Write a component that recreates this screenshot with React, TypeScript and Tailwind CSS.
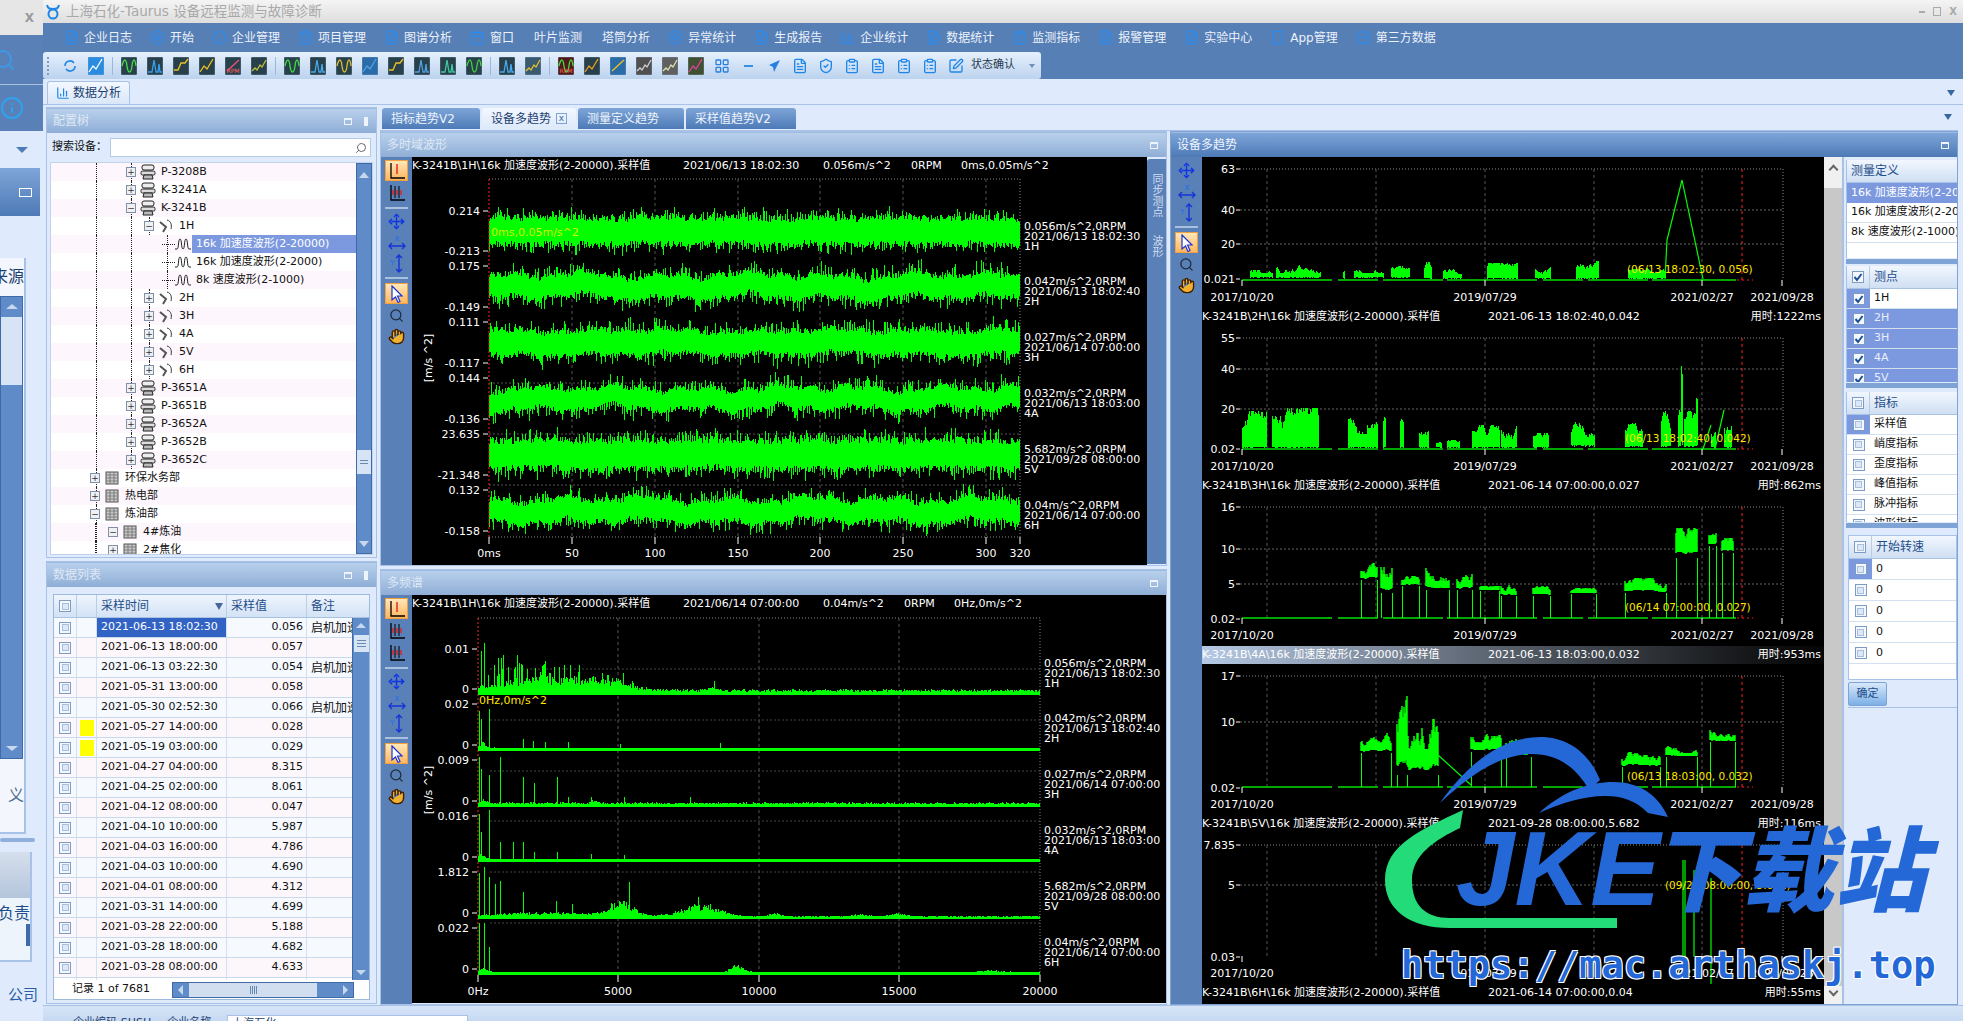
import {
  BarChart3,
  Calendar,
  CheckSquare,
  ClipboardList,
  FileText,
  Hand,
  Info,
  LayoutGrid,
  Move,
  PlayCircle,
  Search,
  ShieldCheck,
  Smartphone,
  SquarePen,
} from 'lucide-react';
import type { ReactNode } from 'react';

const rng = (seed: number) => {
  let s = seed;
  return () => {
    s = (s * 16807) % 2147483647;
    return s / 2147483647;
  };
};

// ---- chart paths ----
const wavePath = (cy: number, amp: number, spike: number, drift: number, seed: number) => {
  const r = rng(seed);
  let d = '';
  for (let x = 489; x < 1020; x += 1) {
    const base =
      (drift * (Math.sin(x / 13 + seed) + 0.7 * Math.sin(x / 5.3 + seed * 2) + 0.5 * Math.sin(x / 31 + seed * 3))) / 1.6;
    let up = amp * (0.75 + r() * 0.55);
    let down = amp * (0.75 + r() * 0.55);
    if (r() < 0.3) up += spike * r();
    if (r() < 0.3) down += spike * r();
    d += `M${x} ${Math.round(cy + base - up)}V${Math.round(cy + base + down)}`;
  }
  return d;
};

type Spec = { base: number; noise: number; spikes: number[][]; humps: number[][]; seed: number; decay?: number };

const specPath = ({ base, noise, spikes, humps, seed, decay = 0 }: Spec) => {
  const r = rng(seed);
  let d = '';
  for (let x = 478; x < 1040; x += 1) {
    let h = noise * (0.5 + r());
    humps.forEach(([c, w, a]) => {
      const t = (x - c) / w;
      h += a * Math.exp(-t * t) * (0.45 + r() * 0.7);
    });
    if (decay && x < 640 && r() < 0.35) h += decay * r() * (1 - (x - 478) / 190);
    d += `M${x} ${base + 2}V${Math.round(base - h)}`;
  }
  spikes.forEach(([x, h]) => {
    d += `M${x} ${base}V${base - h}`;
  });
  return d;
};

const blockPath = (base: number, blocks: number[][], seed: number) => {
  const r = rng(seed);
  let d = '';
  blocks.forEach(([x0, x1, lo, hi]) => {
    let walk = 0.7;
    for (let x = x0; x <= x1; x += 1) {
      walk = Math.min(1, Math.max(0.35, walk + (r() - 0.5) * 0.35));
      const top = lo + (hi - lo) * walk;
      const bottom = lo < 10 ? lo * (0.5 + r() * 0.6) : lo + (hi - lo) * 0.2 * walk;
      d += `M${x} ${Math.round(base - bottom)}V${Math.round(base - top)}`;
    }
  });
  return d;
};

const edgePath = (base: number, blocks: number[][]) =>
  blocks.map(([x0, x1, lo]) => `M${x0} ${base}V${base - lo}M${x1} ${base}V${base - lo}`).join('');

// ---- small glyphs ----
const GLYPHS = [
  'M1 9C3 1 5 1 6 9S10 17 11 9 14 1 15 9',
  'M1 15H5L7 3 9 15H11L12 7 13 15H15',
  'M1 13H5L8 6H12L15 2',
  'M1 15L5 9 8 12 14 2',
  'M2 14L14 3',
  'M1 14L4 11 6 13 9 8 11 10 15 3',
];

const ToolGlyph = ({ v, color, bg = '#27404a', label }: { v: number; color: string; bg?: string; label?: string }) => (
  <svg width="16" height="18" viewBox="0 0 16 18" className="shrink-0">
    <rect x="0" y="0" width="16" height="18" rx="1" fill={bg} stroke="#8ea7c4" strokeWidth="0.5" />
    <path d={GLYPHS[v]} fill="none" stroke={color} strokeWidth="1.3" />
    {label && (
      <text x="8" y="16" fontSize="6" textAnchor="middle" fill="#ff6060">
        {label}
      </text>
    )}
  </svg>
);

const AxisIcon = ({ bars = 1 }: { bars?: number }) => (
  <svg width="20" height="20" viewBox="0 0 20 20">
    <path d="M4 2V17H18" fill="none" stroke="#000" strokeWidth="1.3" />
    {bars > 1 && <path d="M8 3V15M12 3V15" stroke="#000" strokeWidth="1" />}
    <path d={bars > 1 ? 'M6 7V12M10 7V12M14 7V12' : 'M10 3V13'} stroke="#e02020" strokeWidth="1.4" />
  </svg>
);

const CursorIcon = () => (
  <svg width="16" height="18" viewBox="0 0 16 18">
    <path d="M3 1L13 11H8.5L11 16.5 9 17.5 6.5 12 3 15Z" fill="#fff" stroke="#1434d8" strokeWidth="1.2" />
  </svg>
);

const XArrows = () => (
  <svg width="20" height="17" viewBox="0 0 20 17">
    <text x="10" y="6" fontSize="7" textAnchor="middle" fill="#1a6cf0">X</text>
    <path d="M2 11H18M5 8L2 11 5 14M15 8L18 11 15 14" fill="none" stroke="#1434d8" strokeWidth="1.4" />
  </svg>
);

const YArrows = () => (
  <svg width="20" height="19" viewBox="0 0 20 19">
    <text x="3" y="11" fontSize="7" fill="#1a6cf0">Y</text>
    <path d="M12 1V18M9 4L12 1 15 4M9 15L12 18 15 15" fill="none" stroke="#1434d8" strokeWidth="1.4" />
  </svg>
);

const ActiveTool = ({ children }: { children: ReactNode }) => (
  <div className="w-[23px] h-[21px] flex items-center justify-center bg-gradient-to-b from-[#ffe7b8] to-[#ffb65c] border border-[#f0a040]">
    {children}
  </div>
);

const ChartTools = ({ kind }: { kind: 'wave' | 'spectrum' | 'trend' }) => (
  <div className="w-[31px] shrink-0 bg-[#5a80b8] flex flex-col items-center pt-[3px] gap-[2px]">
    {kind !== 'trend' && (
      <>
        <ActiveTool>
          <AxisIcon />
        </ActiveTool>
        {kind === 'spectrum' ? (
          <>
            <AxisIcon bars={3} />
            <AxisIcon bars={3} />
          </>
        ) : (
          <AxisIcon bars={2} />
        )}
        <div className="w-[23px] h-[2px] bg-[#a9c0de] my-[2px]" />
      </>
    )}
    <Move size={17} className={`text-[#1234e0] fill-[#3a7fe8] ${kind === 'trend' ? 'mt-[2px]' : ''}`} />
    <div className="mt-[3px]">
      <XArrows />
    </div>
    <YArrows />
    <div className="w-[23px] h-[2px] bg-[#a9c0de] my-[2px]" />
    <ActiveTool>
      <CursorIcon />
    </ActiveTool>
    <Search size={15} className="text-[#1d2b3a] mt-[2px]" />
    <Hand size={17} className="text-[#402000] fill-[#f0b030] mt-[3px]" />
  </div>
);

const PanelHeader = ({ title, active, pin }: { title: string; active?: boolean; pin?: boolean }) => (
  <div
    className={`h-[25px] shrink-0 flex items-center px-[6px] border-t border-[#9fbbe0] ${
      active
        ? 'bg-gradient-to-b from-[#7ea5d8] to-[#4d7ab6] text-[#f0f5fd]'
        : 'bg-gradient-to-b from-[#b9d0ec] to-[#8faed6] text-[#dfe8f5]'
    }`}
  >
    <span className="text-[12px]">{title}</span>
    <div className="ml-auto flex items-center gap-[12px] pr-[2px]">
      <div className="w-[8px] h-[7px] border border-[#eef4fc] border-t-2" />
      {pin && <div className="w-[4px] h-[9px] bg-[#eef4fc]" />}
    </div>
  </div>
);

// ---- top menu ----
const MENU: [string, number][] = [
  ['企业日志', 0], ['开始', 1], ['企业管理', 2], ['项目管理', 3], ['图谱分析', 4], ['窗口', 5],
  ['叶片监测', -1], ['塔筒分析', -1], ['异常统计', 7], ['生成报告', 4], ['企业统计', 8], ['数据统计', 4],
  ['监测指标', 3], ['报警管理', 4], ['实验中心', 4], ['App管理', 9], ['第三方数据', 10],
];

const MenuIcon = ({ k }: { k: number }) => {
  const c = 'text-[#2a8cf0] shrink-0';
  if (k === -1) return null;
  if (k === 1 || k === 7) return <PlayCircle size={15} className={c} />;
  if (k === 2) return <Info size={15} className={c} />;
  if (k === 3) return <ClipboardList size={15} className={c} />;
  if (k === 5) return <Calendar size={15} className={c} />;
  if (k === 8) return <BarChart3 size={15} className={c} />;
  if (k === 9) return <Smartphone size={15} className={c} />;
  if (k === 10) return <CheckSquare size={15} className={c} />;
  return <FileText size={15} className={c} />;
};

const MenuBar = () => (
  <div className="h-[29px] flex items-center pl-[21px] gap-[18px] text-[12px] text-[#edf2fa]">
    {MENU.map(([label, k], i) => (
      <div key={label} className={`flex items-center gap-[5px] ${i === 6 || i === 7 ? 'ml-[2px]' : ''}`}>
        <MenuIcon k={k} />
        <span>{label}</span>
      </div>
    ))}
  </div>
);

const ToolSep = () => <div className="w-px h-[18px] bg-[#9db7d8] -mx-[2px] shrink-0" />;

const Grip = () => (
  <div className="shrink-0 flex flex-col gap-[2px]">
    <div className="w-[2px] h-[2px] bg-[#7f9cc4]" />
    <div className="w-[2px] h-[2px] bg-[#7f9cc4]" />
    <div className="w-[2px] h-[2px] bg-[#7f9cc4]" />
    <div className="w-[2px] h-[2px] bg-[#7f9cc4]" />
    <div className="w-[2px] h-[2px] bg-[#7f9cc4]" />
  </div>
);

const Toolbar = () => (
  <div className="h-[27px] w-[998px] flex items-center pl-[4px] gap-[10px] rounded-[3px] bg-gradient-to-b from-[#e6f0fd] to-[#bcd3ee]">
    <Grip />
    <svg width="16" height="16" viewBox="0 0 16 16" className="shrink-0 ml-[3px]">
      <path d="M3 8a5 5 0 0 1 9-3M13 8a5 5 0 0 1-9 3" fill="none" stroke="#1f86e8" strokeWidth="1.6" />
    </svg>
    <ToolGlyph v={3} color="#fff" bg="#2a8ce0" />
    <ToolSep />
    <ToolGlyph v={0} color="#48e048" />
    <ToolGlyph v={1} color="#3aa0f0" />
    <ToolGlyph v={2} color="#f0c020" />
    <ToolGlyph v={3} color="#f0c020" />
    <ToolGlyph v={4} color="#f05080" label="RPM" />
    <ToolGlyph v={5} color="#c0c040" />
    <ToolSep />
    <ToolGlyph v={0} color="#40e040" />
    <ToolGlyph v={1} color="#48a8f0" />
    <ToolGlyph v={0} color="#e0c030" />
    <ToolGlyph v={3} color="#50a0e8" bg="#2b6ca8" />
    <ToolGlyph v={2} color="#f0c020" />
    <ToolGlyph v={1} color="#50a0e0" />
    <ToolGlyph v={1} color="#40c8a0" />
    <ToolGlyph v={0} color="#40d040" />
    <ToolSep />
    <ToolGlyph v={1} color="#48a8f0" />
    <ToolGlyph v={5} color="#e0c030" bg="#3a5a70" />
    <ToolSep />
    <ToolGlyph v={0} color="#40e040" bg="#501818" label="RPM" />
    <ToolGlyph v={3} color="#f0a020" />
    <ToolGlyph v={4} color="#f0c020" bg="#2a6ca8" />
    <ToolGlyph v={5} color="#d0d0d0" bg="#505050" />
    <ToolGlyph v={5} color="#e0e0b0" bg="#606060" />
    <ToolGlyph v={3} color="#e040a0" bg="#405030" />
    <LayoutGrid size={16} className="text-[#2a80e0] shrink-0" />
    <div className="w-[16px] flex justify-center shrink-0">
      <div className="w-[9px] h-[2px] bg-[#3a90e0]" />
    </div>
    <svg width="16" height="16" viewBox="0 0 16 16" className="shrink-0">
      <path d="M14 2L3 7 7 9 8 14Z" fill="#2a80e0" />
    </svg>
    <FileText size={16} className="text-[#1f86e8] shrink-0" />
    <ShieldCheck size={16} className="text-[#1f86e8] shrink-0" />
    <ClipboardList size={16} className="text-[#1f86e8] shrink-0" />
    <FileText size={16} className="text-[#1f86e8] shrink-0" />
    <ClipboardList size={16} className="text-[#1f86e8] shrink-0" />
    <ClipboardList size={16} className="text-[#1f86e8] shrink-0" />
    <SquarePen size={16} className="text-[#1f86e8] shrink-0" />
    <span className="text-[11px] text-[#2a3a50] whitespace-nowrap -ml-[3px]">状态确认</span>
    <div className="ml-[4px] w-0 h-0 border-x-[3px] border-x-transparent border-t-[4px] border-t-[#6f8fb8]" />
  </div>
);

// ---- tree ----
type TreeRow = { label: string; level: number; open?: boolean; kind: 'machine' | 'sensor' | 'wave' | 'folder'; selected?: boolean };

const TREE: TreeRow[] = [
  { label: 'P-3208B', level: 2, kind: 'machine' },
  { label: 'K-3241A', level: 2, kind: 'machine' },
  { label: 'K-3241B', level: 2, kind: 'machine', open: true },
  { label: '1H', level: 3, kind: 'sensor', open: true },
  { label: '16k 加速度波形(2-20000)', level: 4, kind: 'wave', selected: true },
  { label: '16k 加速度波形(2-2000)', level: 4, kind: 'wave' },
  { label: '8k 速度波形(2-1000)', level: 4, kind: 'wave' },
  { label: '2H', level: 3, kind: 'sensor' },
  { label: '3H', level: 3, kind: 'sensor' },
  { label: '4A', level: 3, kind: 'sensor' },
  { label: '5V', level: 3, kind: 'sensor' },
  { label: '6H', level: 3, kind: 'sensor' },
  { label: 'P-3651A', level: 2, kind: 'machine' },
  { label: 'P-3651B', level: 2, kind: 'machine' },
  { label: 'P-3652A', level: 2, kind: 'machine' },
  { label: 'P-3652B', level: 2, kind: 'machine' },
  { label: 'P-3652C', level: 2, kind: 'machine' },
  { label: '环保水务部', level: 0, kind: 'folder' },
  { label: '热电部', level: 0, kind: 'folder' },
  { label: '炼油部', level: 0, kind: 'folder', open: true },
  { label: '4#炼油', level: 1, kind: 'folder', open: true },
  { label: '2#焦化', level: 1, kind: 'folder' },
];

const GUIDES: Record<number, number[]> = { 0: [], 1: [44], 2: [45, 80], 3: [45, 80, 98], 4: [45, 80, 116] };

const TreeIcon = ({ kind }: { kind: TreeRow['kind'] }) => {
  if (kind === 'machine')
    return (
      <svg width="16" height="16" viewBox="0 0 16 16" className="shrink-0">
        <rect x="2" y="1" width="12" height="5" rx="2" fill="#eee" stroke="#222" />
        <rect x="1" y="7" width="14" height="4" rx="1.5" fill="#ddd" stroke="#222" />
        <path d="M3 15H13L12 11H4Z" fill="#bbb" stroke="#222" />
      </svg>
    );
  if (kind === 'sensor')
    return (
      <svg width="16" height="16" viewBox="0 0 16 16" className="shrink-0">
        <path d="M2 4L8 9 5 14" fill="none" stroke="#555" strokeWidth="2" />
        <path d="M9 2C13 3 14 7 13 11" fill="none" stroke="#333" />
      </svg>
    );
  if (kind === 'wave')
    return (
      <svg width="16" height="14" viewBox="0 0 16 14" className="shrink-0">
        <path d="M0 12H2C4 12 3 2 5 2S6 12 8 12 9 2 11 2 12 12 14 12H16" fill="none" stroke="#222" />
      </svg>
    );
  return (
    <svg width="16" height="14" viewBox="0 0 16 14" className="shrink-0">
      <rect x="2" y="1" width="12" height="12" fill="#c8c8c8" stroke="#555" />
      <path d="M2 4H14M2 7H14M2 10H14M6 1V13M10 1V13" stroke="#666" strokeWidth="0.7" />
    </svg>
  );
};

const ConfigTree = () => (
  <div className="relative flex-1 min-h-0 flex bg-white overflow-hidden">
    <div className="flex-1 min-w-0 overflow-hidden text-[11px] text-[#111]">
      {TREE.map((row, i) => (
        <div
          key={row.label + i}
          className={`relative h-[18px] flex items-center ${i % 2 ? 'bg-white' : 'bg-[#fdf6fc]'}`}
          style={{ paddingLeft: 39 + row.level * 18 }}
        >
          <div className="absolute left-0 top-0 h-full w-full pointer-events-none">
            {[45, ...GUIDES[row.level].filter((g) => g !== 45)].map((g) => (
              <div key={g} className="absolute top-0 h-full border-l border-dotted border-[#222]" style={{ left: g }} />
            ))}
          </div>
          {row.level === 4 ? (
            <div className="relative w-[13px] shrink-0 border-b border-dotted border-[#222]" />
          ) : (
            <div className="relative z-10 w-[10px] h-[10px] shrink-0 bg-[#f0f0f0] border border-[#8090a8] flex items-center justify-center text-[9px] leading-none text-[#334]">
              {row.open ? '−' : '+'}
            </div>
          )}
          <div className={`${row.level === 4 ? 'w-0' : 'w-[4px]'} shrink-0`} />
          <TreeIcon kind={row.kind} />
          <span
            className={`ml-[1px] flex-1 h-full flex items-center pl-[4px] whitespace-nowrap ${
              row.selected ? 'bg-[#7c99df] text-white' : ''
            }`}
          >
            {row.label}
          </span>
        </div>
      ))}
    </div>
    <div className="w-[16px] shrink-0 flex flex-col items-center bg-[#5f8cc8] border border-[#3f6aa8]">
      <div className="w-0 h-0 mt-[8px] border-x-[5px] border-x-transparent border-b-[6px] border-b-[#c6d7ee]" />
      <div className="w-full h-[24px] mt-[272px] bg-[#d7e4f5] flex flex-col gap-[2px] items-center justify-center">
        <div className="w-[8px] h-px bg-[#6a8ab0]" />
        <div className="w-[8px] h-px bg-[#6a8ab0]" />
      </div>
      <div className="w-0 h-0 mt-auto mb-[6px] border-x-[5px] border-x-transparent border-t-[6px] border-t-[#c6d7ee]" />
    </div>
  </div>
);

// ---- data list ----
const SAMPLES: [string, string, string?, boolean?][] = [
  ['2021-06-13 18:02:30', '0.056', '启机加速'],
  ['2021-06-13 18:00:00', '0.057'],
  ['2021-06-13 03:22:30', '0.054', '启机加速'],
  ['2021-05-31 13:00:00', '0.058'],
  ['2021-05-30 02:52:30', '0.066', '启机加速'],
  ['2021-05-27 14:00:00', '0.028', '', true],
  ['2021-05-19 03:00:00', '0.029', '', true],
  ['2021-04-27 04:00:00', '8.315'],
  ['2021-04-25 02:00:00', '8.061'],
  ['2021-04-12 08:00:00', '0.047'],
  ['2021-04-10 10:00:00', '5.987'],
  ['2021-04-03 16:00:00', '4.786'],
  ['2021-04-03 10:00:00', '4.690'],
  ['2021-04-01 08:00:00', '4.312'],
  ['2021-03-31 14:00:00', '4.699'],
  ['2021-03-28 22:00:00', '5.188'],
  ['2021-03-28 18:00:00', '4.682'],
  ['2021-03-28 08:00:00', '4.633'],
];

const Check = ({ checked }: { checked?: boolean }) => (
  <div className="w-[12px] h-[12px] border border-[#7d9cc4] bg-[#f4f8fe] flex items-center justify-center shrink-0">
    {checked ? (
      <svg width="10" height="10" viewBox="0 0 10 10">
        <path d="M1.5 5L4 8 8.5 2" fill="none" stroke="#1e4f96" strokeWidth="2" />
      </svg>
    ) : (
      <div className="w-[7px] h-[7px] bg-[#dce8f6] border border-[#a8c0de]" />
    )}
  </div>
);

const DataList = () => (
  <div className="flex-1 min-h-0 mx-[6px] mt-[7px] mb-[3px] border border-[#9db9dc] bg-white flex flex-col text-[11px] overflow-hidden">
    <div className="h-[23px] shrink-0 flex bg-gradient-to-b from-[#eff5fd] to-[#d3e2f5] text-[#1d4d8a] border-b border-[#a8c2e2]">
      <div className="w-[23px] flex items-center justify-center border-r border-[#b9cde6]">
        <Check />
      </div>
      <div className="w-[20px] border-r border-[#b9cde6]" />
      <div className="w-[130px] flex items-center pl-[4px] pr-[3px] border-r border-[#b9cde6] text-[12px]">
        采样时间
        <div className="ml-auto w-0 h-0 border-x-[4px] border-x-transparent border-t-[7px] border-t-[#44689c]" />
      </div>
      <div className="w-[80px] flex items-center pl-[4px] border-r border-[#b9cde6] text-[12px]">采样值</div>
      <div className="flex-1 flex items-center pl-[4px] text-[12px]">备注</div>
    </div>
    <div className="flex-1 min-h-0 flex">
      <div className="flex-1 min-w-0 flex flex-col overflow-hidden">
        {SAMPLES.map(([time, val, note, flag], i) => (
          <div
            key={time}
            className={`h-[20px] shrink-0 flex text-[#111] border-b border-[#c9d9ec] ${i % 2 ? 'bg-[#fdf7fb]' : 'bg-[#f6faff]'}`}
          >
            <div className="w-[23px] flex items-center justify-center border-r border-[#d3e0f0]">
              <Check />
            </div>
            <div className="w-[20px] flex items-center justify-center border-r border-[#d3e0f0]">
              {flag && <div className="w-[14px] h-[16px] bg-[#ffff00]" />}
            </div>
            <div
              className={`w-[130px] flex items-center pl-[4px] border-r border-[#d3e0f0] ${
                i === 0 ? 'bg-[#3162c4] text-white' : ''
              }`}
            >
              {time}
            </div>
            <div className="w-[80px] flex items-center justify-end pr-[3px] border-r border-[#d3e0f0]">{val}</div>
            <div className="flex-1 flex items-center pl-[4px] whitespace-nowrap overflow-hidden text-[12px]">{note}</div>
          </div>
        ))}
        <div className="flex-1 flex">
          <div className="w-[23px] border-r border-[#d3e0f0]" />
          <div className="w-[20px] border-r border-[#d3e0f0]" />
          <div className="w-[130px] border-r border-[#d3e0f0]" />
          <div className="w-[80px] border-r border-[#d3e0f0]" />
        </div>
      </div>
      <div className="w-[17px] shrink-0 bg-[#5f8cc8] border-l border-[#3f6aa8] flex flex-col items-center">
        <div className="w-0 h-0 mt-[5px] border-x-[5px] border-x-transparent border-b-[5px] border-b-[#c6d7ee]" />
        <div className="w-[15px] h-[17px] mt-[7px] bg-[#d7e4f5] flex flex-col gap-[2px] items-center justify-center">
          <div className="w-[9px] h-px bg-[#6a8ab0]" />
          <div className="w-[9px] h-px bg-[#6a8ab0]" />
          <div className="w-[9px] h-px bg-[#6a8ab0]" />
        </div>
        <div className="w-0 h-0 mt-auto mb-[5px] border-x-[5px] border-x-transparent border-t-[5px] border-t-[#c6d7ee]" />
      </div>
    </div>
    <div className="h-[19px] shrink-0 flex items-center">
      <span className="w-[118px] shrink-0 pl-[18px] text-[#111]">记录 1 of 7681</span>
      <div className="w-[182px] h-[16px] bg-[#5f8cc8] border border-[#3f6aa8] flex items-center px-[5px]">
        <div className="w-0 h-0 border-y-[5px] border-y-transparent border-r-[5px] border-r-[#c6d7ee]" />
        <div className="w-[128px] h-[14px] ml-[6px] bg-[#d0deef] flex items-center justify-center gap-[1px]">
          <div className="w-px h-[8px] bg-[#6a8ab0]" />
          <div className="w-px h-[8px] bg-[#6a8ab0]" />
          <div className="w-px h-[8px] bg-[#6a8ab0]" />
          <div className="w-px h-[8px] bg-[#6a8ab0]" />
        </div>
        <div className="ml-auto w-0 h-0 border-y-[5px] border-y-transparent border-l-[5px] border-l-[#c6d7ee]" />
      </div>
    </div>
  </div>
);

// ---- multi time domain ----
const WAVE_ROWS = [
  { top: 211, low: 251, hi: '0.214', lo: '-0.213', a: '0.056m/s^2,0RPM', b: '2021/06/13 18:02:30', c: '1H', amp: 13, spike: 9, drift: 1, seed: 11 },
  { top: 266, low: 307, hi: '0.175', lo: '-0.149', a: '0.042m/s^2,0RPM', b: '2021/06/13 18:02:40', c: '2H', amp: 11, spike: 10, drift: 4, seed: 29 },
  { top: 322, low: 363, hi: '0.111', lo: '-0.117', a: '0.027m/s^2,0RPM', b: '2021/06/14 07:00:00', c: '3H', amp: 12, spike: 10, drift: 2.5, seed: 47 },
  { top: 378, low: 419, hi: '0.144', lo: '-0.136', a: '0.032m/s^2,0RPM', b: '2021/06/13 18:03:00', c: '4A', amp: 10, spike: 11, drift: 4, seed: 83 },
  { top: 434, low: 475, hi: '23.635', lo: '-21.348', a: '5.682m/s^2,0RPM', b: '2021/09/28 08:00:00', c: '5V', amp: 14, spike: 10, drift: 1, seed: 101 },
  { top: 490, low: 531, hi: '0.132', lo: '-0.158', a: '0.04m/s^2,0RPM', b: '2021/06/14 07:00:00', c: '6H', amp: 11, spike: 9, drift: 4, seed: 131 },
];
const WAVE_X: [string, number][] = [['0ms', 489], ['50', 572], ['100', 655], ['150', 738], ['200', 820], ['250', 903], ['300', 986], ['320', 1020]];

const WaveChart = () => (
  <svg width="735" height="408" viewBox="412 157 735 408" className="block shrink-0" fontSize="11" fill="#fff">
    <rect x="412" y="157" width="735" height="408" fill="#000" />
    <text x="412" y="169">K-3241B\1H\16k 加速度波形(2-20000).采样值</text>
    <text x="683" y="169">2021/06/13 18:02:30</text>
    <text x="823" y="169">0.056m/s^2</text>
    <text x="911" y="169">0RPM</text>
    <text x="961" y="169">0ms,0.05m/s^2</text>
    <path d="M489 179H1020V537H489" fill="none" stroke="#888" strokeDasharray="1 2" />
    {WAVE_X.slice(1, -1).map(([, x]) => (
      <path key={x} d={`M${x} 179V537`} stroke="#555" strokeDasharray="3 3" />
    ))}
    <path d="M489 383H1020M489 434H1020M489 485H1020" stroke="#555" strokeDasharray="2 2" />
    {WAVE_ROWS.map((r) => (
      <g key={r.c}>
        <path d={wavePath((r.top + r.low) / 2, r.amp, r.spike, r.drift, r.seed)} stroke="#00ff00" strokeWidth="1" shapeRendering="crispEdges" />
        <text x="480" y={r.top + 4} textAnchor="end">{r.hi}</text>
        <text x="480" y={r.low + 4} textAnchor="end">{r.lo}</text>
        <path d={`M483 ${r.top}H488M483 ${r.low}H488`} stroke="#fff" />
        <text x="1024" y={r.top + 19}>{r.a}</text>
        <text x="1024" y={r.top + 29}>{r.b}</text>
        <text x="1024" y={r.top + 39}>{r.c}</text>
      </g>
    ))}
    <path d="M489 179V537" stroke="#ff2020" strokeDasharray="2 2" />
    <text x="491" y="236" fill="#d8ef00">0ms,0.05m/s^2</text>
    {WAVE_X.map(([label, x]) => (
      <g key={label}>
        <path d={`M${x} 537V544`} stroke="#fff" />
        <text x={x} y="557" textAnchor="middle">{label}</text>
      </g>
    ))}
    <text transform="translate(432 358) rotate(-90)" textAnchor="middle">[m/s ^2]</text>
  </svg>
);

// ---- multi spectrum ----
const SPEC_ROWS: (Spec & { hi: string; zero: number; top: number; a: string; b: string; c: string })[] = [
  {
    hi: '0.01', top: 649, zero: 689, base: 693, noise: 2.5, seed: 7, decay: 28, a: '0.056m/s^2,0RPM', b: '2021/06/13 18:02:30', c: '1H',
    spikes: [[481, 42], [484, 50], [494, 28], [498, 35], [503, 38], [517, 38], [522, 28], [543, 28], [570, 28], [608, 18], [623, 20], [714, 12]],
    humps: [[545, 60, 13], [610, 28, 7], [712, 6, 4]],
  },
  {
    hi: '0.02', top: 704, zero: 745, base: 749, noise: 1, seed: 19, a: '0.042m/s^2,0RPM', b: '2021/06/13 18:02:40', c: '2H',
    spikes: [[479, 38], [481, 30], [489, 40], [523, 10], [533, 8], [545, 7], [568, 7], [620, 5], [720, 6]],
    humps: [[482, 5, 6]],
  },
  {
    hi: '0.009', top: 760, zero: 801, base: 805, noise: 1.8, seed: 31, a: '0.027m/s^2,0RPM', b: '2021/06/14 07:00:00', c: '3H',
    spikes: [[479, 48], [481, 36], [489, 30], [500, 48], [523, 28], [534, 22], [557, 28], [568, 8], [591, 8], [624, 8], [690, 8]],
    humps: [[483, 5, 4], [593, 4, 3]],
  },
  {
    hi: '0.016', top: 816, zero: 857, base: 860, noise: 1, seed: 43, a: '0.032m/s^2,0RPM', b: '2021/06/13 18:03:00', c: '4A',
    spikes: [[479, 46], [481, 28], [489, 50], [500, 18], [513, 18], [523, 18], [534, 8], [557, 8], [591, 6], [624, 5]],
    humps: [[481, 4, 6]],
  },
  {
    hi: '1.812', top: 872, zero: 913, base: 917, noise: 0.6, seed: 59, a: '5.682m/s^2,0RPM', b: '2021/09/28 08:00:00', c: '5V',
    spikes: [[479, 44], [484, 50], [489, 40], [495, 33], [500, 36], [523, 25], [556, 16], [572, 13], [611, 14], [620, 15], [629, 35], [698, 20]],
    humps: [[550, 70, 4], [622, 16, 14], [700, 26, 12], [775, 8, 3], [860, 12, 2], [898, 12, 3]],
  },
  {
    hi: '0.022', top: 928, zero: 969, base: 973, noise: 1, seed: 71, a: '0.04m/s^2,0RPM', b: '2021/06/14 07:00:00', c: '6H',
    spikes: [[479, 50], [484, 50], [489, 26]],
    humps: [[482, 6, 4], [737, 8, 7], [990, 10, 2]],
  },
];
const SPEC_X: [string, number][] = [['0Hz', 478], ['5000', 618], ['10000', 759], ['15000', 899], ['20000', 1040]];

const SpecChart = () => (
  <svg width="755" height="408" viewBox="412 595 755 408" className="block shrink-0" fontSize="11" fill="#fff">
    <rect x="412" y="595" width="755" height="408" fill="#000" />
    <text x="412" y="607">K-3241B\1H\16k 加速度波形(2-20000).采样值</text>
    <text x="683" y="607">2021/06/14 07:00:00</text>
    <text x="823" y="607">0.04m/s^2</text>
    <text x="904" y="607">0RPM</text>
    <text x="954" y="607">0Hz,0m/s^2</text>
    <path d="M478 618H1040V975" fill="none" stroke="#888" strokeDasharray="1 2" />
    <path d="M478 618V975" stroke="#ff2020" strokeDasharray="2 2" />
    {SPEC_X.slice(1, -1).map(([, x]) => (
      <path key={x} d={`M${x} 618V975`} stroke="#555" strokeDasharray="3 3" />
    ))}
    <path d="M490 669H1040M490 720H1040M490 771H1040M490 821H1040M490 872H1040M490 923H1040" stroke="#444" strokeDasharray="2 2" />
    {SPEC_ROWS.map((r) => (
      <g key={r.c}>
        <path d={specPath(r)} stroke="#00ff00" strokeWidth="1" shapeRendering="crispEdges" />
        <text x="469" y={r.top + 4} textAnchor="end">{r.hi}</text>
        <text x="469" y={r.zero + 4} textAnchor="end">0</text>
        <path d={`M472 ${r.top}H477M472 ${r.zero}H477`} stroke="#fff" />
        <text x="1044" y={r.top + 18}>{r.a}</text>
        <text x="1044" y={r.top + 28}>{r.b}</text>
        <text x="1044" y={r.top + 38}>{r.c}</text>
      </g>
    ))}
    <text x="479" y="704" fill="#ffe600">0Hz,0m/s^2</text>
    {SPEC_X.map(([label, x]) => (
      <g key={label}>
        <path d={`M${x} 975V982`} stroke="#fff" />
        <text x={x} y="995" textAnchor="middle">{label}</text>
      </g>
    ))}
    <text transform="translate(432 790) rotate(-90)" textAnchor="middle">[m/s ^2]</text>
  </svg>
);

// ---- trends ----
type Trend = {
  title?: [string, string, string];
  highlight?: boolean;
  top: number;
  ticks: [string, number][];
  first: string;
  note: string;
  noteX: number;
  noteY?: number;
  filled?: number[][];
  floating?: number[][];
  extra?: string;
};

const TRENDS: Trend[] = [
  {
    top: 169,
    first: '2017/10/20',
    ticks: [['63', 169], ['40', 210], ['20', 244], ['0.021', 279]],
    note: '(06/13 18:02:30, 0.056)',
    noteX: 1626,
    filled: [[1249, 1271, 3, 14], [1275, 1319, 3, 15], [1342, 1343, 2, 10], [1353, 1382, 3, 14], [1390, 1408, 3, 14], [1423, 1430, 2, 18], [1442, 1460, 2, 13], [1486, 1516, 2, 17], [1534, 1549, 2, 13], [1575, 1597, 2, 19], [1627, 1664, 2, 12]],
    extra: 'M1664 279L1666 240 1681 180 1702 279',
  },
  {
    title: ['K-3241B\\2H\\16k 加速度波形(2-20000).采样值', '2021-06-13 18:02:40,0.042', '用时:1222ms'],
    top: 338,
    first: '2017/10/20',
    ticks: [['55', 338], ['40', 369], ['20', 409], ['0.02', 449]],
    note: '(06/13 18:02:40, 0.042)',
    noteX: 1624,
    filled: [[1241, 1265, 2, 38], [1271, 1317, 2, 41], [1347, 1366, 2, 38], [1366, 1376, 2, 30], [1382, 1384, 2, 36], [1399, 1402, 2, 33], [1418, 1427, 2, 18], [1435, 1440, 2, 7], [1446, 1458, 2, 9], [1471, 1498, 2, 24], [1500, 1515, 2, 26], [1532, 1547, 2, 16], [1570, 1593, 4, 28], [1624, 1641, 3, 26], [1660, 1669, 3, 38], [1677, 1679, 3, 60], [1680, 1681, 8, 99], [1683, 1694, 3, 38], [1695, 1696, 4, 80], [1710, 1714, 2, 22], [1723, 1730, 2, 36]],
    extra: 'M1702 449L1710 425M1714 449L1723 410',
  },
  {
    title: ['K-3241B\\3H\\16k 加速度波形(2-20000).采样值', '2021-06-14 07:00:00,0.027', '用时:862ms'],
    top: 507,
    first: '2017/10/20',
    ticks: [['16', 507], ['10', 549], ['5', 584], ['0.02', 619]],
    note: '(06/14 07:00:00, 0.027)',
    noteX: 1624,
    floating: [[1360, 1376, 38, 55], [1380, 1391, 25, 70], [1401, 1418, 32, 42], [1425, 1448, 28, 55], [1456, 1471, 28, 45], [1479, 1498, 27, 32], [1500, 1515, 22, 35], [1532, 1549, 22, 32], [1570, 1595, 24, 30], [1624, 1665, 25, 40], [1675, 1696, 60, 90], [1708, 1715, 72, 85], [1721, 1732, 65, 80]],
  },
  {
    title: ['K-3241B\\4A\\16k 加速度波形(2-20000).采样值', '2021-06-13 18:03:00,0.032', '用时:953ms'],
    highlight: true,
    top: 676,
    first: '2017/10/20',
    ticks: [['17', 676], ['10', 722], ['0.02', 788]],
    note: '(06/13 18:03:00, 0.032)',
    noteX: 1626,
    floating: [[1360, 1390, 34, 55], [1396, 1406, 12, 95], [1406, 1437, 12, 85], [1470, 1500, 35, 55], [1505, 1530, 30, 50], [1621, 1659, 20, 35], [1665, 1696, 30, 42], [1709, 1734, 45, 60]],
    extra: 'M1437 755L1470 785',
  },
  {
    title: ['K-3241B\\5V\\16k 加速度波形(2-20000).采样值', '2021-09-28 08:00:00,5.682', '用时:116ms'],
    top: 845,
    first: '2017/10/20',
    ticks: [['7.835', 845], ['5', 885], ['0.03', 957]],
    note: '(09/28 08:00:00, 5.682)',
    noteX: 1664,
    noteY: 889,
    extra: 'M1682 957V860M1684 957V860M1693 957V870M1710 957V878 1726 957 1766 906',
  },
];

const TrendChart = ({ t, i }: { t: Trend; i: number }) => {
  const base = t.top + 111;
  const y0 = t.top - 12;
  const lines = [1266, 1375, 1484, 1593, 1701];
  const labels: [string, number][] = [[t.first, 1241], ['2019/07/29', 1484], ['2021/02/27', 1701], ['2021/09/28', 1781]];
  return (
    <div className="shrink-0">
      {t.title && (
        <div
          className={`h-[18px] flex items-center text-[11px] whitespace-nowrap text-white ${
            t.highlight ? 'bg-gradient-to-r from-[#b6cae6] via-[#555d68] to-[#050505]' : ''
          }`}
        >
          <span className="w-[286px]">{t.title[0]}</span>
          <span>{t.title[1]}</span>
          <span className="ml-auto pr-[3px]">{t.title[2]}</span>
        </div>
      )}
      <svg width="622" height="151" viewBox={`1201 ${y0} 622 151`} className="block" fontSize="11" fill="#fff">
        <path d={`M1239 ${t.top}H1782V${base}`} fill="none" stroke="#888" strokeDasharray="1 2" />
        {lines.map((x) => (
          <path key={x} d={`M${x} ${t.top}V${base}`} stroke="#555" strokeDasharray="3 3" />
        ))}
        {t.ticks.slice(1, -1).map(([l, y]) => (
          <path key={l} d={`M1239 ${y}H1782`} stroke="#666" strokeDasharray="2 2" />
        ))}
        <path d={`M1741 ${t.top}V${base}`} stroke="#ff2020" strokeDasharray="3 3" />
        <path d={`M1241 ${base}H1735`} stroke="#00e000" strokeWidth={i === 4 ? 0 : 1.5} strokeDasharray="90 6 40 5 60 4" />
        {t.filled && <path d={blockPath(base, t.filled, 17 + i)} stroke="#00ff00" strokeWidth="1" shapeRendering="crispEdges" />}
        {t.floating && <path d={edgePath(base, t.floating)} stroke="#00ff00" strokeWidth="1" shapeRendering="crispEdges" />}
        {t.floating && <path d={blockPath(base, t.floating, 17 + i)} stroke="#00ff00" strokeWidth="1.5" />}
        {t.extra && <path d={t.extra} fill="none" stroke="#00ff00" strokeWidth="1.2" />}
        <path d={`M1736 ${base}H1752`} stroke="#ff2020" strokeDasharray="2 3" />
        {t.ticks.map(([l, y]) => (
          <g key={l}>
            <text x="1234" y={y + 4} textAnchor="end">{l}</text>
            <path d={`M1235 ${y}H1239`} stroke="#fff" />
          </g>
        ))}
        {labels.map(([l, x]) => (
          <g key={l}>
            <path d={`M${x} ${base}V${base + 6}`} stroke="#fff" />
            <text x={x} y={base + 21} textAnchor="middle">{l}</text>
          </g>
        ))}
        <text x={t.noteX} y={t.noteY ?? base - 7} fill="#ffe600" fontSize="10.5">{t.note}</text>
      </svg>
    </div>
  );
};

// ---- right filters ----
const ListHead = ({ label, check, checked }: { label: string; check?: boolean; checked?: boolean }) => (
  <div className="h-[23px] shrink-0 flex items-center bg-gradient-to-b from-[#f2f7fe] to-[#cfdff3] text-[#1d4d8a] text-[12px] border-b border-[#a8c2e2]">
    {check && (
      <div className="w-[23px] h-full shrink-0 flex items-center justify-center border-r border-[#b9cde6]">
        <Check checked={checked} />
      </div>
    )}
    <span className="pl-[4px] whitespace-nowrap">{label}</span>
  </div>
);

const CheckRow = ({ label, checked, selected, dim, tall }: { label: string; checked?: boolean; selected?: boolean; dim?: boolean; tall?: boolean }) => (
  <div className={`${tall ? 'h-[21px]' : 'h-[20px]'} shrink-0 flex items-center border-b border-[#d3e0f0] ${dim ? 'bg-[#7c99df] text-[#e8eefb]' : 'bg-white text-[#111]'}`}>
    <div className={`w-[23px] h-full shrink-0 flex items-center justify-center ${selected || dim ? 'bg-[#7c99df]' : ''}`}>
      <Check checked={checked} />
    </div>
    <span className="pl-[4px] whitespace-nowrap">{label}</span>
  </div>
);

const Splitter = () => <div className="h-[5px] shrink-0 mt-[1px] mb-[2px] bg-[#7fa3d4]" />;

const FilterColumn = () => (
  <div className="flex-1 min-w-0 flex flex-col bg-[#dfebfd] border-l-2 border-[#a7c2e6] text-[11px] pl-[2px] overflow-hidden">
    <div className="h-[98px] shrink-0 mt-[3px] border-l border-[#a7c2e6] bg-white overflow-hidden">
      <ListHead label="测量定义" />
      <div className="h-[20px] flex items-center pl-[4px] whitespace-nowrap bg-[#7c99df] text-white">16k 加速度波形(2-20000)</div>
      <div className="h-[20px] flex items-center pl-[4px] whitespace-nowrap text-[#111] border-b border-[#d3e0f0]">16k 加速度波形(2-2000)</div>
      <div className="h-[20px] flex items-center pl-[4px] whitespace-nowrap text-[#111] border-b border-[#d3e0f0]">8k 速度波形(2-1000)</div>
    </div>
    <Splitter />
    <div className="h-[116px] shrink-0 border-l border-[#a7c2e6] bg-white flex flex-col overflow-hidden">
      <ListHead label="测点" check checked />
      <CheckRow label="1H" checked selected />
      <CheckRow label="2H" checked dim />
      <CheckRow label="3H" checked dim />
      <CheckRow label="4A" checked dim />
      <CheckRow label="5V" checked dim />
    </div>
    <Splitter />
    <div className="h-[130px] shrink-0 mt-[2px] border-l border-[#a7c2e6] bg-white flex flex-col overflow-hidden">
      <ListHead label="指标" check />
      <CheckRow label="采样值" selected />
      <CheckRow label="峭度指标" />
      <CheckRow label="歪度指标" />
      <CheckRow label="峰值指标" />
      <CheckRow label="脉冲指标" />
      <CheckRow label="波形指标" />
    </div>
    <Splitter />
    <div className="h-[145px] shrink-0 ml-[2px] mt-[5px] border border-[#a7c2e6] bg-white flex flex-col overflow-hidden">
      <ListHead label="开始转速" check />
      <CheckRow label="0" selected tall />
      <CheckRow label="0" tall />
      <CheckRow label="0" tall />
      <CheckRow label="0" tall />
      <CheckRow label="0" tall />
    </div>
    <div className="ml-[2px] h-[28px] shrink-0 pt-[2px] border-b border-[#a7c2e6]">
      <button className="w-[39px] h-[24px] rounded-[2px] border border-[#7fa3d4] bg-gradient-to-b from-[#d9e8fa] to-[#7cb0e6] text-[#1d4d8a] text-[11px]">
        确定
      </button>
    </div>
  </div>
);

const LeftRail = () => (
  <div className="w-[43px] shrink-0 flex flex-col bg-[#dfebfd] text-[#2a5ea8] overflow-hidden">
    <div className="h-[35px] shrink-0 flex items-start justify-end pr-[9px] pt-[9px] bg-[#e6e6e6] text-[#999] text-[12px] font-bold">X</div>
    <div className="h-[50px] shrink-0 flex items-center pl-[2px] bg-[#5a80b8] border-b border-[#a9c0de]">
      <Search size={24} className="text-[#3d98e8] -ml-[10px]" />
    </div>
    <div className="h-[46px] shrink-0 flex items-center bg-[#5a80b8]">
      <Info size={24} className="text-[#2ea2ee]" />
    </div>
    <div className="h-[37px] shrink-0 flex items-center justify-center">
      <div className="w-0 h-0 border-x-[6px] border-x-transparent border-t-[6px] border-t-[#4f7cb9]" />
    </div>
    <div className="w-[40px] h-[48px] shrink-0 flex items-center justify-end pr-[8px] bg-gradient-to-b from-[#7fa5d8] to-[#4d7ab6]">
      <div className="w-[13px] h-[9px] border border-white" />
    </div>
    <div className="w-[40px] flex-1 flex flex-col">
      <div className="w-[26px] h-[576px] mt-[42px] shrink-0 bg-[#f3f7fd] border-r-2 border-b-2 border-[#a7c2e6] flex flex-col">
        <div className="h-[38px] shrink-0 flex items-center text-[16px] whitespace-nowrap justify-end overflow-hidden text-[#1d3f70]">来源</div>
        <div className="w-[23px] h-[463px] shrink-0 bg-[#5f8cc8] border border-[#3f6aa8] flex flex-col items-center">
          <div className="w-0 h-0 mt-[7px] border-x-[6px] border-x-transparent border-b-[5px] border-b-[#c6d7ee]" />
          <div className="w-full h-[68px] mt-[8px] bg-[#d7e4f5]" />
          <div className="w-0 h-0 mt-auto mb-[7px] border-x-[6px] border-x-transparent border-t-[5px] border-t-[#c6d7ee]" />
        </div>
        <div className="flex-1 flex items-center justify-end text-[16px] text-[#4e6a90] overflow-hidden">义</div>
      </div>
      <div className="w-[35px] h-[4px] shrink-0 mt-[4px] bg-[#8fb0dc] rounded-full" />
      <div className="w-[32px] h-[110px] shrink-0 mt-[10px] bg-[#eef4fc] border-r-2 border-b-2 border-[#a7c2e6] flex flex-col">
        <div className="h-[46px] shrink-0 bg-gradient-to-b from-[#d5dfec] to-[#b4c5dc]" />
        <div className="mt-[6px] text-[16px] leading-[20px] whitespace-nowrap flex justify-end text-[#1d4d8a]">负责</div>
        <div className="w-[4px] h-[22px] ml-auto mr-0 bg-[#3f6aa8]" />
      </div>
      <div className="mt-[22px] text-[15px] flex justify-end pr-[2px] whitespace-nowrap overflow-hidden text-[#2a5ea8]">公司</div>
    </div>
  </div>
);

const Watermark = () => (
  <div className="absolute left-[1380px] top-[730px] w-[583px] h-[291px] pointer-events-none overflow-hidden">
    <svg width="300" height="210" viewBox="1380 730 300 210" className="absolute left-0 top-0">
      <path d="M1440 803C1470 760 1505 737 1540 737C1570 737 1590 755 1600 780L1589 790C1578 770 1560 754 1532 754C1500 754 1470 775 1440 803Z" fill="#2468d8" />
      <path d="M1539 813C1565 790 1590 782 1613 782C1640 782 1658 795 1668 817L1648 813C1635 800 1622 796 1605 796C1585 796 1560 803 1539 813Z" fill="#2468d8" />
      <path d="M1463 810C1420 830 1385 845 1385 880C1385 910 1410 928 1450 928H1617V918H1450C1425 918 1412 905 1412 880C1412 855 1435 840 1460 828Z" fill="#24db7a" />
    </svg>
    <div className="absolute left-[76px] top-[79px] text-[105px] leading-[120px] font-bold italic text-[#2468d8] [font-family:'Liberation_Sans',sans-serif] whitespace-nowrap">JKE</div>
    <div className="absolute left-[270px] top-[74px] text-[92px] leading-[120px] font-black italic text-[#2468d8] [font-family:'Noto_Sans_CJK_SC',sans-serif] whitespace-nowrap">下载站</div>
    <div className="absolute left-[21px] top-[211px] text-[37px] leading-[50px] font-bold text-[#2468d8] [font-family:'DejaVu_Sans_Mono',monospace] whitespace-nowrap [text-shadow:1px_1px_0_#fff,-1px_-1px_0_#fff,1px_-1px_0_#fff,-1px_1px_0_#fff]">
      https://mac.arthaskj.top
    </div>
  </div>
);

const TABS = ['指标趋势V2', '设备多趋势', '测量定义趋势', '采样值趋势V2'];

const App = () => (
  <div className="relative w-[1963px] h-[1021px] flex overflow-hidden bg-[#dfebfd] [font-family:'DejaVu_Sans','Noto_Sans_CJK_SC',sans-serif]">
    <LeftRail />
    <div className="flex-1 min-w-0 flex flex-col">
      {/* Title bar */}
      <div className="h-[23px] shrink-0 flex items-center gap-[5px] pl-[2px] pr-[6px] bg-gradient-to-b from-[#f4f4f4] to-[#dedede]">
        <svg width="16" height="16" viewBox="0 0 16 16">
          <circle cx="8" cy="10" r="4.5" fill="none" stroke="#1f86e8" strokeWidth="2" />
          <path d="M2 1C3 5 5 5 8 5S13 5 14 1" fill="none" stroke="#1f86e8" strokeWidth="2" />
        </svg>
        <span className="text-[13.5px] text-[#a8a8a8]">上海石化-Taurus 设备远程监测与故障诊断</span>
        <div className="ml-auto flex items-center gap-[8px] text-[#aaa]">
          <div className="w-[6px] h-[2px] bg-[#aaa]" />
          <div className="w-[8px] h-[9px] border border-[#aaa]" />
          <span className="text-[10px] font-bold">X</span>
        </div>
      </div>
      {/* Ribbon */}
      <div className="h-[56px] shrink-0 bg-[#567fb6]">
        <MenuBar />
        <Toolbar />
      </div>
      <div className="h-[26px] shrink-0 flex items-end pl-[4px] pr-[8px] bg-[#dfebfd] border-b border-[#a7c2e6]">
        <div className="h-[23px] w-[83px] flex items-center justify-center gap-[3px] bg-gradient-to-b from-[#f3f8ff] to-[#d9e7f9] border border-b-0 border-[#a7c2e6] rounded-t-[3px] text-[12px] text-[#1d3f70]">
          <BarChart3 size={14} className="text-[#1f86e8]" />
          数据分析
        </div>
        <div className="ml-auto mb-[8px] w-0 h-0 border-x-[4px] border-x-transparent border-t-[6px] border-t-[#36689f]" />
      </div>
      {/* Main area */}
      <div className="flex-1 min-h-0 flex pl-[3px] pr-[5px]">
        <div className="w-[331px] shrink-0 flex flex-col pt-[2px] pb-[1px] gap-[3px]">
          <div className="h-[451px] shrink-0 flex flex-col border border-[#a7c2e6] bg-[#dfebfd]">
            <PanelHeader title="配置树" pin />
            <div className="h-[29px] shrink-0 flex items-center gap-[3px] px-[5px] text-[11px] text-[#111]">
              搜索设备：
              <div className="flex-1 h-[19px] bg-white border border-[#b4c9e4] flex items-center justify-end pr-[3px]">
                <Search size={12} className="text-[#667] -scale-x-100" />
              </div>
            </div>
            <div className="flex-1 min-h-0 mx-[3px] mb-[2px] flex border border-[#c0d3ea]">
              <ConfigTree />
            </div>
          </div>
          <div className="flex-1 min-h-0 flex flex-col border border-[#a7c2e6] bg-[#dfebfd]">
            <PanelHeader title="数据列表" pin />
            <DataList />
          </div>
        </div>
        <div className="flex-1 min-w-0 flex flex-col pl-[3px]">
          <div className="h-[26px] shrink-0 flex items-end gap-[2px] pl-[2px] pb-[1px] border-b border-[#a7c2e6]">
            {TABS.map((tab, i) => (
              <div
                key={tab}
                className={`h-[21px] flex items-center px-[9px] rounded-t-[3px] text-[12px] whitespace-nowrap ${
                  i === 1
                    ? 'w-[94px] bg-gradient-to-b from-[#f3f8ff] to-[#dce9fa] text-[#1d3f70] gap-[5px]'
                    : 'bg-gradient-to-b from-[#7ea5d8] to-[#4d7ab6] text-[#eef4fc] ' + (i === 0 ? 'w-[98px]' : i === 2 ? 'w-[106px]' : 'w-[110px]')
                }`}
              >
                {tab}
                {i === 1 && (
                  <span className="shrink-0 w-[11px] h-[11px] border border-[#7fa3d4] text-[9px] leading-[9px] text-center text-[#36689f]">x</span>
                )}
              </div>
            ))}
            <div className="ml-auto mr-[6px] mb-[9px] w-0 h-0 border-x-[4px] border-x-transparent border-t-[6px] border-t-[#36689f]" />
          </div>
          <div className="flex-1 min-h-0 flex gap-[3px]">
            <div className="w-[787px] shrink-0 flex flex-col gap-[3px]">
              <div className="h-[435px] shrink-0 flex flex-col border border-[#a7c2e6]">
                <PanelHeader title="多时域波形" />
                <div className="flex-1 min-h-0 flex bg-[#dfebfd]">
                  <ChartTools kind="wave" />
                  <WaveChart />
                  <div className="flex-1 bg-[#5a80b8] rounded-tl-[3px] mt-[2px] mb-[1px] text-[#cfdcee] text-[11px] leading-[13px] flex flex-col items-center pt-[14px] gap-[18px]">
                    <span className="[writing-mode:vertical-rl]">同步测点</span>
                    <span className="[writing-mode:vertical-rl]">波形</span>
                  </div>
                </div>
              </div>
              <div className="flex-1 min-h-0 flex flex-col border border-[#a7c2e6]">
                <PanelHeader title="多频谱" />
                <div className="flex-1 min-h-0 flex overflow-hidden">
                  <ChartTools kind="spectrum" />
                  <SpecChart />
                </div>
              </div>
            </div>
            <div className="flex-1 min-w-0 flex flex-col border border-[#7fa3d4]">
              <PanelHeader title="设备多趋势" active />
              <div className="flex-1 min-h-0 flex overflow-hidden">
                <ChartTools kind="trend" />
                <div className="w-[622px] shrink-0 flex flex-col bg-black overflow-hidden">
                  {TRENDS.map((t, i) => (
                    <TrendChart key={t.top} t={t} i={i} />
                  ))}
                  <div className="h-[18px] shrink-0 flex items-center text-[11px] whitespace-nowrap text-white">
                    <span className="w-[286px]">K-3241B\6H\16k 加速度波形(2-20000).采样值</span>
                    <span>2021-06-14 07:00:00,0.04</span>
                    <span className="ml-auto pr-[3px]">用时:55ms</span>
                  </div>
                </div>
                <div className="w-[18px] shrink-0 flex flex-col bg-[#c8c8c8]">
                  <div className="h-[31px] bg-[#f0f0f0] flex justify-center pt-[6px]">
                    <div className="w-[7px] h-[7px] border-l-2 border-t-2 border-[#666] rotate-45 mt-[3px]" />
                  </div>
                  <div className="mt-auto h-[18px] bg-[#f0f0f0] flex justify-center">
                    <div className="w-[7px] h-[7px] border-r-2 border-b-2 border-[#666] rotate-45 mt-[2px]" />
                  </div>
                </div>
                <FilterColumn />
              </div>
            </div>
          </div>
        </div>
      </div>
      {/* Status bar */}
      <div className="h-[16px] shrink-0 flex pl-[30px] gap-[16px] pt-[9px] bg-gradient-to-b from-[#d6e4f7] to-[#c6d9f2] text-[11px] leading-[16px] text-[#1d3f70] overflow-hidden border-t border-[#a7c2e6]">
        <span className="whitespace-nowrap shrink-0">企业编码:SHSH</span>
        <span className="whitespace-nowrap shrink-0">企业名称</span>
        <div className="w-[241px] h-[16px] shrink-0 bg-white border border-[#a7c2e6] pl-[4px]">上海石化</div>
      </div>
    </div>
    <Watermark />
  </div>
);

export default App;
